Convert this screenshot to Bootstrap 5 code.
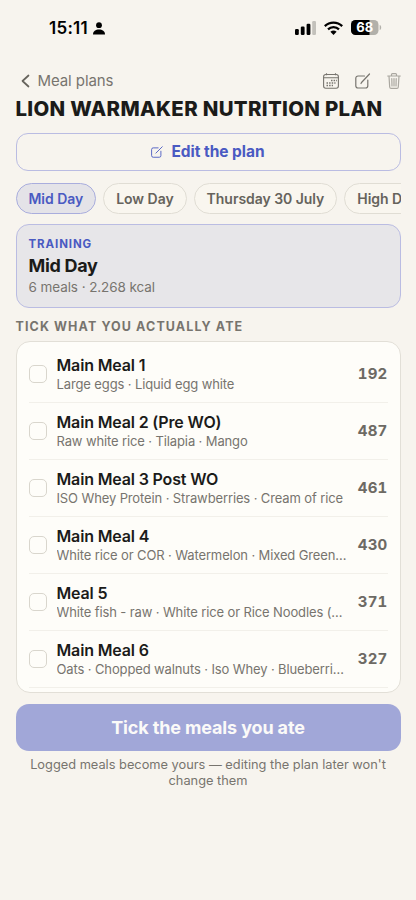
<!DOCTYPE html>
<html lang="en">
<head>
<meta charset="utf-8">
<meta name="viewport" content="width=device-width, initial-scale=1">
<title>Meal plans</title>
<link href="https://cdn.jsdelivr.net/npm/bootstrap@5.3.0/dist/css/bootstrap.min.css" rel="stylesheet">
<style>
body{font-family:Inter,"Liberation Sans",sans-serif;background:#f7f4ee;color:#1b1b19;height:900px;overflow:hidden}
svg{display:block;flex:none}
.status{height:56px;padding:0 34px 0 49px;color:#000}
.status-icons{gap:8px;margin-top:-1px}
.clock{font-size:17px;font-weight:600;letter-spacing:.25px;line-height:20px}
.status .gap-1{gap:5px!important}
.page{padding:14px 15.5px 0 15.5px}
.topbar{height:22px;color:#77746e;font-size:15px;line-height:22px;padding:0 0 0 5px;letter-spacing:-.08px}
.plan-title{font-size:20.4px;font-weight:800;line-height:26px;margin:4px 0 11px;white-space:nowrap;letter-spacing:.32px}
.edit-btn{height:38px;border:1px solid #babce2;border-radius:12px;color:#4a5ac2;font-size:15.5px;font-weight:700;padding:0;letter-spacing:-.03px}
.chips{margin-top:12px;gap:7px;overflow:hidden;height:31px}
.chip{flex:none;height:31px;border:1px solid #e0ddd4;border-radius:16px;padding:0 12px;font-size:14px;font-weight:600;line-height:29px;color:#66635c;white-space:nowrap;background:#f9f6ef;letter-spacing:-.04px}
.chip.on{background:#e4e3e8;border-color:#a9addd;color:#4a5ac2}
.day-card{margin-top:10px;height:84px;border:1px solid #babce2;border-radius:13px;background:#e7e6e9;padding:11px 12px 0}
.kicker{font-size:11.5px;font-weight:700;letter-spacing:.9px;line-height:17px;color:#4a5ac2}
.day-name{font-size:18px;font-weight:700;line-height:25px;letter-spacing:-.3px}
.day-sub{font-size:13.5px;line-height:19px;color:#77746e;letter-spacing:-.08px}
.section-label{font-size:12.5px;font-weight:700;letter-spacing:1.1px;line-height:18px;color:#77746e;margin:10px 0 5px}
.meals{height:352px;border:1px solid #e2dfd7;border-radius:14px;background:#fefdf9;padding:4px 12px}
.meal{height:57px;border-bottom:1px solid #f2f0ea;gap:10px;padding:0}
.form-check-input.tick{width:18px;height:18px;border:1.5px solid #d9d6cd;border-radius:5px;margin:0;flex:none;background:transparent}
.meal-name{font-size:16px;font-weight:600;line-height:20px;letter-spacing:-.16px}
.meal-sub{font-size:13px;line-height:18px;color:#77746e;letter-spacing:-.12px}
.kcal{font-size:15px;font-weight:700;color:#6d6a64;letter-spacing:.2px;font-variant-numeric:tabular-nums}
.save{height:47px;margin-top:11px;border:0;border-radius:13px;background:#a1a7d8;color:#fbfaf8;font-size:18px;font-weight:700;letter-spacing:-.14px;padding:0}
.note{font-size:12.8px;line-height:16px;color:#77746e;margin-top:6px;padding:0 12px}
</style>
</head>
<body>
<header class="status d-flex align-items-center justify-content-between">
  <div class="d-flex align-items-center gap-1">
    <span class="clock">15:11</span>
    <svg width="12" height="13" viewBox="0 0 12 13"><circle cx="6" cy="3.2" r="2.9"/><path d="M0 12.4C0 9.2 2.6 7.4 6 7.4s6 1.8 6 5z"/></svg>
  </div>
  <div class="status-icons d-flex align-items-center">
    <svg width="21" height="14" viewBox="0 0 21 14"><rect y="8" width="3.8" height="6" rx="1.2"/><rect x="5.8" y="5.5" width="3.8" height="8.5" rx="1.2"/><rect x="11.6" y="2.7" width="3.8" height="11.3" rx="1.2"/><rect x="17.2" width="3.8" height="14" rx="1.2" fill="#c3c1bb"/></svg>
    <svg width="19" height="14" viewBox="0 0 19 14"><g fill="none" stroke="#000" stroke-width="2.3"><path d="M.8 5.1a12.5 12.5 0 0 1 17.4 0"/><path d="M4 8.4a8 8 0 0 1 11 0"/></g><path d="M6.4 10.8a4.6 4.6 0 0 1 6.2 0L9.5 14z"/></svg>
    <svg width="31" height="15" viewBox="0 0 31 15"><defs><clipPath id="lvl"><rect width="18.5" height="15"/></clipPath></defs><rect width="27.5" height="15" rx="4.5" fill="#b2b0aa"/><rect width="27.5" height="15" rx="4.5" clip-path="url(#lvl)"/><path d="M28.7 5c2 .5 2 4.5 0 5z" fill="#b2b0aa"/><text x="13.7" y="12.1" text-anchor="middle" font-family="Inter" font-size="13" font-weight="700" fill="#fff">68</text></svg>
  </div>
</header>
<main class="page">
  <div class="topbar d-flex align-items-center">
    <svg width="9" height="14" viewBox="0 0 9 14" fill="none" stroke="#66635c" stroke-width="1.7" stroke-linecap="round" stroke-linejoin="round"><path d="M7.5 1.5 1.5 7l6 5.500"/></svg>
    <span class="ms-2 me-auto">Meal plans</span>
    <svg width="16" height="16" viewBox="0 0 16 16" fill="none" stroke="#77746e" stroke-width="1.1"><rect x=".6" y="1.5" width="14.8" height="13.8" rx="2.2"/><path d="M.6 4.800h14.800M3.500.3v2M12.500.3v2"/><path d="M8 7.500h6M3.500 10h9M3.500 12.500h6.500" stroke-width="1.4" stroke-dasharray="1.5 1.1"/></svg>
    <svg class="ms-3" width="16" height="16" viewBox="0 0 16 16" fill="none" stroke="#77746e" stroke-width="1.2" stroke-linecap="round"><path d="M9.500 3H3A2.200 2.200 0 0 0 .8 5.200v7.600A2.200 2.200 0 0 0 3 15h7.600a2.200 2.200 0 0 0 2.200-2.200V7M6.500 9.500 14.500 1M6.500 9.500l-.5 1"/></svg>
    <svg class="ms-3" width="14" height="16" viewBox="0 0 14 16" fill="none" stroke="#aaa7a0" stroke-width="1.2" stroke-linecap="round"><path d="M.7 3h12.600M4.500 3V1.500q0-.9.9-.9h3.200q.9 0 .9.900V3M2 3l.7 11q.1 1.400 1.400 1.400h5.800q1.300 0 1.400-1.400L12 3M4.800 5.500l.2 7.500M7 5.500V13M9.200 5.500 9 13"/></svg>
  </div>
  <h1 class="plan-title">LION WARMAKER NUTRITION PLAN</h1>
  <button type="button" class="btn edit-btn w-100 d-flex align-items-center justify-content-center gap-2">
    <svg width="12" height="12" viewBox="0 0 16 16" fill="none" stroke="#4a5ac2" stroke-width="1.2" stroke-linecap="round"><path d="M9.500 2.500H3A2.200 2.200 0 0 0 .8 4.700v8.100A2.200 2.200 0 0 0 3 15h8a2.200 2.200 0 0 0 2.200-2.200V7M6.500 9.500 15 1"/></svg>
    <span>Edit the plan</span>
  </button>
  <nav class="chips d-flex">
    <span class="chip on">Mid Day</span><span class="chip">Low Day</span><span class="chip">Thursday 30 July</span><span class="chip">High Day</span>
  </nav>
  <section class="day-card">
    <div class="kicker">TRAINING</div>
    <div class="day-name">Mid Day</div>
    <div class="day-sub">6 meals · 2.268 kcal</div>
  </section>
  <div class="section-label">TICK WHAT YOU ACTUALLY ATE</div>
  <section class="meals">
    <label class="meal d-flex align-items-center"><input type="checkbox" class="form-check-input tick"><span class="flex-grow-1 overflow-hidden"><span class="meal-name d-block">Main Meal 1</span><span class="meal-sub d-block text-truncate">Large eggs · Liquid egg white</span></span><span class="kcal">192</span></label>
    <label class="meal d-flex align-items-center"><input type="checkbox" class="form-check-input tick"><span class="flex-grow-1 overflow-hidden"><span class="meal-name d-block">Main Meal 2 (Pre WO)</span><span class="meal-sub d-block text-truncate">Raw white rice · Tilapia · Mango</span></span><span class="kcal">487</span></label>
    <label class="meal d-flex align-items-center"><input type="checkbox" class="form-check-input tick"><span class="flex-grow-1 overflow-hidden"><span class="meal-name d-block">Main Meal 3 Post WO</span><span class="meal-sub d-block text-truncate">ISO Whey Protein · Strawberries · Cream of rice</span></span><span class="kcal">461</span></label>
    <label class="meal d-flex align-items-center"><input type="checkbox" class="form-check-input tick"><span class="flex-grow-1 overflow-hidden"><span class="meal-name d-block">Main Meal 4</span><span class="meal-sub d-block text-nowrap">White rice or COR · Watermelon · Mixed Green…</span></span><span class="kcal">430</span></label>
    <label class="meal d-flex align-items-center"><input type="checkbox" class="form-check-input tick"><span class="flex-grow-1 overflow-hidden"><span class="meal-name d-block">Meal 5</span><span class="meal-sub d-block text-nowrap">White fish - raw · White rice or Rice Noodles (…</span></span><span class="kcal">371</span></label>
    <label class="meal d-flex align-items-center"><input type="checkbox" class="form-check-input tick"><span class="flex-grow-1 overflow-hidden"><span class="meal-name d-block">Main Meal 6</span><span class="meal-sub d-block text-nowrap">Oats · Chopped walnuts · Iso Whey · Blueberri…</span></span><span class="kcal">327</span></label>
  </section>
  <button type="button" class="btn save w-100">Tick the meals you ate</button>
  <p class="note text-center mb-0">Logged meals become yours — editing the plan later won't change them</p>
</main>
<script src="https://cdn.jsdelivr.net/npm/bootstrap@5.3.0/dist/js/bootstrap.bundle.min.js"></script>
</body>
</html>
